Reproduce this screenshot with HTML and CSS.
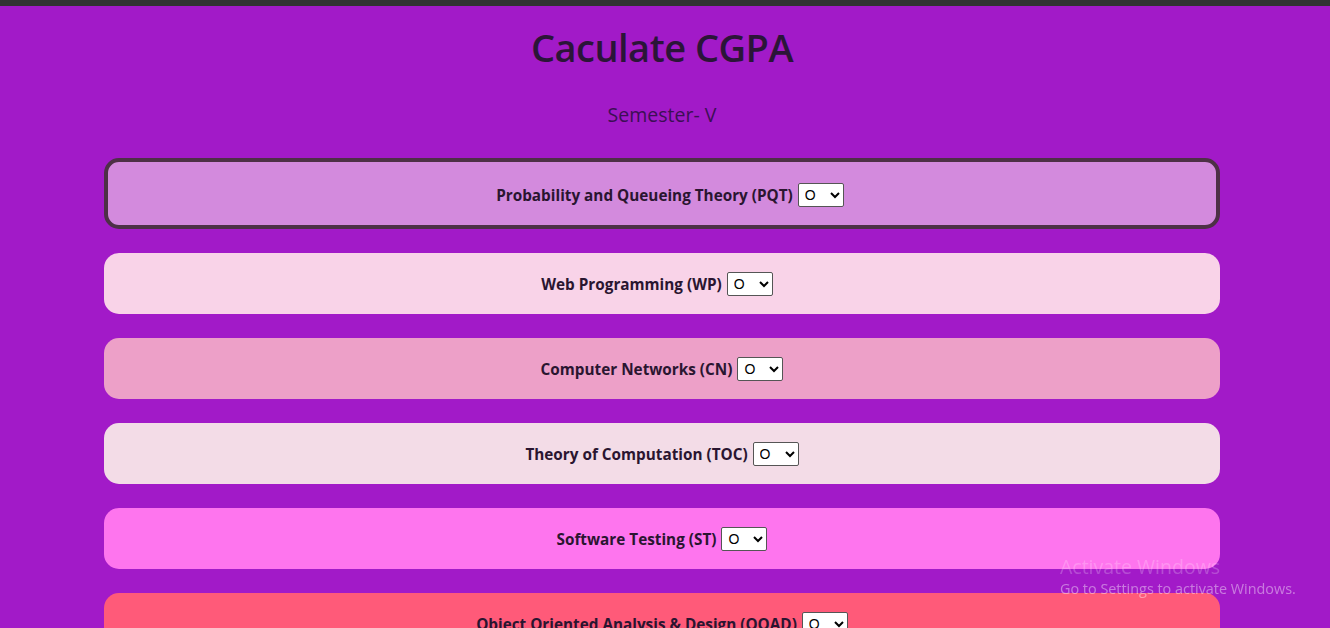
FILE: index.html
```html
<!DOCTYPE html>
<html lang="en">
<head>
<meta charset="utf-8">
<title>Caculate CGPA</title>
<link rel="stylesheet" href="styles.css">
</head>
<body>
<div class="topbar"></div>
<main class="page">
  <h1 class="title">Caculate CGPA</h1>
  <h3 class="semester">Semester- V</h3>
  <div class="subjects">
    <div class="subject c1 active"><label>Probability and Queueing Theory (PQT)</label> <select><option>O</option><option>A+</option><option>A</option><option>B+</option><option>B</option><option>C</option></select></div>
    <div class="subject c2"><label>Web Programming (WP)</label> <select><option>O</option><option>A+</option><option>A</option></select></div>
    <div class="subject c3"><label>Computer Networks (CN)</label> <select><option>O</option><option>A+</option><option>A</option></select></div>
    <div class="subject c4"><label>Theory of Computation (TOC)</label> <select><option>O</option><option>A+</option><option>A</option></select></div>
    <div class="subject c5"><label>Software Testing (ST)</label> <select><option>O</option><option>A+</option><option>A</option></select></div>
    <div class="subject c6"><label>Object Oriented Analysis &amp; Design (OOAD)</label> <select><option>O</option><option>A+</option><option>A</option></select></div>
  </div>
</main>
<div class="watermark">
  <div class="wm-title">Activate Windows</div>
  <div class="wm-sub">Go to Settings to activate Windows.</div>
</div>
</body>
</html>
```
FILE: styles.css
```css
html, body {
  margin: 0;
  padding: 0;
  height: 100%;
  overflow: hidden;
}
body {
  background: #a21ac8;
  font-family: "Open Sans", "Noto Sans", sans-serif;
  color: #2a1530;
}
.topbar {
  height: 6px;
  background: #333333;
}
.page {
  padding: 0 6px 0 0;
}
.title {
  margin: 19px 0 0;
  text-align: center;
  font-size: 38px;
  font-weight: 600;
  line-height: 44px;
  color: #2b1538;
  letter-spacing: -0.5px;
}
.semester {
  margin: 34px 0 0;
  text-align: center;
  font-size: 19.5px;
  font-weight: 500;
  line-height: 24px;
  color: #3c0f55;
}
.subjects {
  margin: 31px auto 0;
  width: 1116px;
  display: flex;
  flex-direction: column;
  gap: 24px;
}
.subject {
  height: 61px;
  flex-shrink: 0;
  box-sizing: border-box;
  border-radius: 15px;
  display: flex;
  align-items: center;
  justify-content: center;
  gap: 5px;
  padding-top: 1px;
  font-size: 15.3px;
  font-weight: 700;
  color: #2a1530;
}
.subject.active {
  height: 71px;
  border: 4px solid #4d3046;
  padding-left: 16px;
  padding-top: 2px;
}
.c2 {
  padding-right: 10px;
}
.subject select {
  height: 24px;
  width: 46px;
  font-family: "Liberation Sans", Arial, sans-serif;
  font-size: 14px;
  background: #ffffff;
  border: 1px solid #555;
  border-radius: 2px;
  color: #000;
  padding: 0 2px;
}
.c1 { background: #d38add; }
.c2 { background: #f9d3e8; }
.c3 { background: #eda0c8; }
.c4 { background: #f3dce7; }
.c5 { background: #fe75ee; }
.c6 { background: #ff5a79; }
.watermark {
  position: fixed;
  left: 1060px;
  top: 555px;
  font-family: "Open Sans", "Noto Sans", sans-serif;
  pointer-events: none;
}
.wm-title {
  font-size: 19.5px;
  line-height: 24px;
  color: rgba(255, 255, 255, 0.22);
}
.wm-sub {
  font-size: 14.4px;
  line-height: 20px;
  color: rgba(255, 255, 255, 0.42);
}
```
